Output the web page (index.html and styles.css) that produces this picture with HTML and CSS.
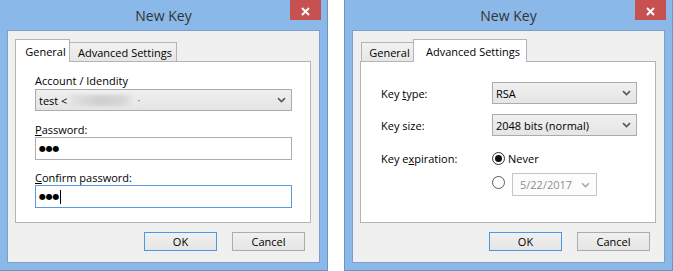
FILE: index.html
```html
<!DOCTYPE html>
<html>
<head>
<meta charset="utf-8">
<title>New Key</title>
<link rel="stylesheet" href="styles.css">
</head>
<body>
<div class="desk">
  <!-- Left dialog: General tab -->
  <div class="dialog dialog-left">
    <div class="titlebar">
      <span class="title">New Key</span>
      <span class="close"><svg width="9" height="9" viewBox="0 0 9 9"><path d="M1 1 L8 8 M8 1 L1 8" stroke="#fff" stroke-width="2" fill="none"/></svg></span>
    </div>
    <div class="client">
      <div class="tabs">
        <div class="tab selected tab-general-sel">General</div>
        <div class="tab tab-adv">Advanced Settings</div>
      </div>
      <div class="panel panel-general">
        <div class="lbl lbl-first">Account / Idendity</div>
        <div class="combo combo-wide">
          <span class="combo-text">test &lt;<span class="blur"></span><span class="speck">·</span></span>
          <svg class="chev" width="9" height="6" viewBox="0 0 9 6"><path d="M1 1.2 L4.5 4.6 L8 1.2" stroke="#5b5b5b" stroke-width="1.7" fill="none"/></svg>
        </div>
        <div class="lbl lbl-second"><u>P</u>assword:</div>
        <div class="input"><span class="dots">●●●</span></div>
        <div class="lbl lbl-third"><u>C</u>onfirm password:</div>
        <div class="input focused"><span class="dots">●●●</span><span class="caret"></span></div>
      </div>
      <div class="footer">
        <button class="btn default">OK</button>
        <button class="btn">Cancel</button>
      </div>
    </div>
  </div>

  <!-- Right dialog: Advanced Settings tab -->
  <div class="dialog dialog-right">
    <div class="titlebar">
      <span class="title">New Key</span>
      <span class="close"><svg width="9" height="9" viewBox="0 0 9 9"><path d="M1 1 L8 8 M8 1 L1 8" stroke="#fff" stroke-width="2" fill="none"/></svg></span>
    </div>
    <div class="client">
      <div class="tabs">
        <div class="tab tab-general">General</div>
        <div class="tab selected tab-adv-sel">Advanced Settings</div>
      </div>
      <div class="panel panel-adv">
        <div class="row row-1">
          <div class="rlbl">Key <u>t</u>ype:</div>
          <div class="combo combo-narrow">
            <span class="combo-text">RSA</span>
            <svg class="chev" width="9" height="6" viewBox="0 0 9 6"><path d="M1 1.2 L4.5 4.6 L8 1.2" stroke="#5b5b5b" stroke-width="1.7" fill="none"/></svg>
          </div>
        </div>
        <div class="row row-2">
          <div class="rlbl">Key size:</div>
          <div class="combo combo-narrow">
            <span class="combo-text">2048 bits (normal)</span>
            <svg class="chev" width="9" height="6" viewBox="0 0 9 6"><path d="M1 1.2 L4.5 4.6 L8 1.2" stroke="#5b5b5b" stroke-width="1.7" fill="none"/></svg>
          </div>
        </div>
        <div class="row row-3">
          <div class="rlbl">Key e<u>x</u>piration:</div>
          <span class="radio checked"><span class="radio-dot"></span></span>
          <span class="radio-text">Never</span>
        </div>
        <div class="row row-4">
          <div class="rlbl"></div>
          <span class="radio radio-off"></span>
          <div class="datepicker">
            <span class="date-text">5/22/2017</span>
            <svg class="chev" width="9" height="6" viewBox="0 0 9 6"><path d="M1 1.2 L4.5 4.6 L8 1.2" stroke="#a8a8a8" stroke-width="1.5" fill="none"/></svg>
          </div>
        </div>
      </div>
      <div class="footer">
        <button class="btn default">OK</button>
        <button class="btn">Cancel</button>
      </div>
    </div>
  </div>
</div>
</body>
</html>
```

FILE: styles.css
```css
* { box-sizing: border-box; }

html, body {
  margin: 0;
  padding: 0;
  background: #ffffff;
}

body {
  font-family: "Open Sans", "Noto Sans", "Liberation Sans", sans-serif;
  font-size: 11px;
  color: #000;
}

.desk {
  display: flex;
  gap: 16px;
  width: 673px;
  height: 271px;
  overflow: hidden;
}

.dialog {
  flex-shrink: 0;
  width: 329px;
  height: 271px;
  background: #8ab8e8;
  border: 1px solid #6f94c2;
  border-top: 0;
  display: flex;
  flex-direction: column;
}

.dialog-left { margin-left: -1px; }

.titlebar {
  height: 30px;
  display: grid;
  grid-template-columns: 1fr auto 1fr;
  align-items: start;
}

.title {
  grid-column: 2;
  font-size: 14px;
  line-height: 30px;
  padding-top: 1px;
  color: #333;
  white-space: nowrap;
}

.close {
  grid-column: 3;
  justify-self: end;
  margin-right: 6px;
  width: 31px;
  height: 20px;
  background: #c75050;
  display: flex;
  align-items: center;
  justify-content: center;
  padding-top: 2px;
}

.close svg { display: block; }

.client {
  flex: 1;
  margin: 0 7px 7px 7px;
  background: #f0f0f0;
  border: 1px solid #7c9ec8;
  padding: 8px 0 0 7px;
  display: flex;
  flex-direction: column;
}

/* Tabs */
.tabs {
  position: relative;
  z-index: 1;
  display: flex;
  align-items: flex-end;
  height: 23px;
  margin-bottom: -1px;
}

.tab {
  height: 20px;
  border: 1px solid #b4b4b4;
  background: linear-gradient(#f2f2f2, #e6e6e6);
  display: flex;
  align-items: center;
  justify-content: center;
  white-space: nowrap;
  padding-top: 1px;
}

.tab.selected {
  height: 23px;
  background: #fff;
  border-bottom: 0;
  padding-bottom: 1px;
}

.tab-general-sel { width: 55px; padding-left: 6px; }
.tab-adv { width: 107px; margin-left: 0; border-left: 0; padding-left: 4px; }
.tab-general { width: 52px; margin-left: 1px; border-right: 0; padding-left: 4px; }
.tab-adv-sel { width: 114px; padding-left: 6px; }

.panel {
  width: 296px;
  height: 162px;
  background: #fff;
  border: 1px solid #b4b4b4;
}

/* General panel */
.panel-general {
  padding: 11px 18px 0 19px;
}

.lbl {
  height: 15px;
  line-height: 15px;
  white-space: nowrap;
}

.lbl-first { margin-bottom: 1px; }
.lbl-second { margin-top: 11px; }
.lbl-third { margin-top: 10px; }

.combo {
  height: 22px;
  border: 1px solid #acacac;
  background: linear-gradient(#efefef, #e5e5e5);
  display: flex;
  align-items: center;
  justify-content: space-between;
  padding: 0 5px 0 3px;
}

.combo-wide { width: 257px; }
.combo-narrow { width: 145px; }

.combo-text {
  display: flex;
  align-items: center;
  white-space: nowrap;
}

.chev { display: block; flex-shrink: 0; }

.blur {
  display: inline-block;
  width: 66px;
  height: 11px;
  margin-left: 3px;
  background: linear-gradient(90deg, #e2e2e2, #cfcfcf 45%, #d6d6d6 80%, #ececec);
  filter: blur(1.5px);
}

.speck {
  color: #3a6a9a;
  margin-left: 1px;
  font-size: 10px;
}

.input {
  width: 257px;
  height: 23px;
  border: 1px solid #abadb3;
  background: #fff;
  display: flex;
  align-items: center;
  padding-left: 3px;
}

.input.focused { border-color: #569de5; }

.dots {
  font-family: "DejaVu Sans", sans-serif;
  font-size: 8px;
  line-height: 10px;
  letter-spacing: -0.2px;
}

.caret {
  display: inline-block;
  width: 1px;
  height: 14px;
  background: #000;
  margin-left: 1px;
}

/* Advanced panel */
.panel-adv {
  padding: 20px 0 0 20px;
}

.row {
  display: flex;
  align-items: center;
}

.rlbl {
  width: 111px;
  flex-shrink: 0;
  white-space: nowrap;
}

.row-1 { height: 22px; }
.row-2 { height: 22px; margin-top: 10px; }
.row-3 { height: 14px; margin-top: 15px; }
.row-4 { height: 23px; margin-top: 8px; align-items: flex-start; }

.radio {
  width: 13px;
  height: 13px;
  border-radius: 50%;
  border: 1px solid #333;
  background: #fff;
  display: flex;
  align-items: center;
  justify-content: center;
  flex-shrink: 0;
}

.radio-dot {
  width: 7px;
  height: 7px;
  border-radius: 50%;
  background: #111;
}

.radio-off {
  border-color: #5a5a5a;
  margin-top: 3px;
}

.radio-text { margin-left: 3px; }

.datepicker {
  margin-left: 7px;
  width: 85px;
  height: 23px;
  border: 1px solid #c6c6c6;
  background: #fcfcfc;
  display: flex;
  align-items: center;
  justify-content: space-between;
  padding: 0 6px 0 7px;
}

.date-text { color: #8e8e8e; }

/* Footer buttons */
.footer {
  display: flex;
  justify-content: flex-end;
  gap: 15px;
  margin-top: 9px;
  margin-right: 14px;
}

.btn {
  width: 73px;
  height: 19px;
  border: 1px solid #acacac;
  background: linear-gradient(#f0f0f0, #e5e5e5);
  font-family: "Open Sans", "Noto Sans", "Liberation Sans", sans-serif;
  font-size: 11px;
  color: #000;
  padding: 0;
  line-height: 17px;
}

.btn.default { border-color: #4d97e0; }
```
